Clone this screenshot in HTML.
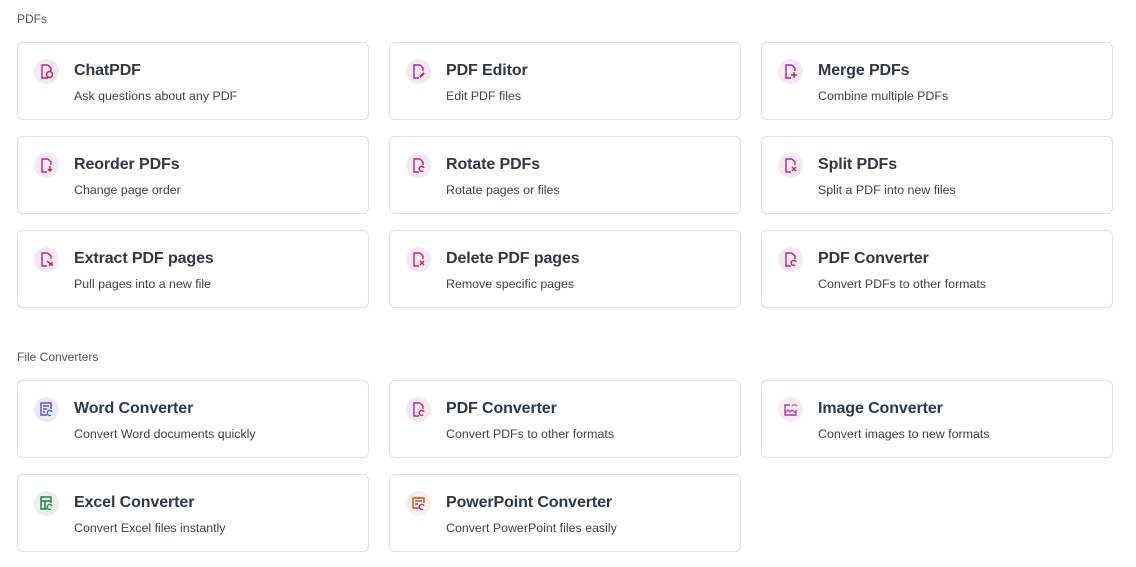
<!DOCTYPE html>
<html><head><meta charset="utf-8"><style>
*{box-sizing:border-box;margin:0;padding:0}
body{width:1136px;height:567px;background:#fff;font-family:"Liberation Sans",sans-serif;position:relative;overflow:hidden}
.h{position:absolute;left:17px;font-size:12px;color:#4a5160}
.c{position:absolute;width:352px;height:78px;border:1px solid #dcdfe4;border-radius:6px;background:#fff}
.ic{position:absolute;left:16px;top:16px;width:25px;height:25px;border-radius:50%;background:#f6e8f3}
.ic svg{position:absolute;left:5px;top:5px}
.t{position:absolute;left:56px;top:19px;font-size:16px;font-weight:bold;color:#2f3847;letter-spacing:-0.1px}
.s{position:absolute;left:56px;top:46px;font-size:12.4px;color:#3a4252}
</style></head><body>
<div class="h" style="top:12px">PDFs</div>
<div class="h" style="top:350px">File Converters</div>

<div class="c" style="left:17px;top:42px"><div class="ic"><svg width="15" height="15" viewBox="0 0 15 15" fill="none" stroke="#b0279b" stroke-width="1.4"><path d="M9 1H3v13h6M9 1l3 3v3"/><circle cx="10.5" cy="10.5" r="3" stroke="#d0243a"/></svg></div><div class="t">ChatPDF</div><div class="s">Ask questions about any PDF</div></div>
<div class="c" style="left:389px;top:42px"><div class="ic"><svg width="15" height="15" viewBox="0 0 15 15" fill="none" stroke="#b0279b" stroke-width="1.4"><path d="M9 1H3v13h5M9 1l3 3v3"/><path d="M9 13l4-4" stroke="#d0243a" stroke-width="2"/></svg></div><div class="t">PDF Editor</div><div class="s">Edit PDF files</div></div>
<div class="c" style="left:761px;top:42px"><div class="ic"><svg width="15" height="15" viewBox="0 0 15 15" fill="none" stroke="#b0279b" stroke-width="1.4"><path d="M9 1H3v13h5M9 1l3 3v3"/><path d="M11 8v6M8 11h6" stroke="#d0243a"/></svg></div><div class="t">Merge PDFs</div><div class="s">Combine multiple PDFs</div></div>

<div class="c" style="left:17px;top:136px"><div class="ic"><svg width="15" height="15" viewBox="0 0 15 15" fill="none" stroke="#b0279b" stroke-width="1.4"><path d="M9 1H3v13h5M9 1l3 3v3"/><path d="M11 8v5M9 11l2 2 2-2" stroke="#d0243a"/></svg></div><div class="t">Reorder PDFs</div><div class="s">Change page order</div></div>
<div class="c" style="left:389px;top:136px"><div class="ic"><svg width="15" height="15" viewBox="0 0 15 15" fill="none" stroke="#b0279b" stroke-width="1.4"><path d="M9 1H3v13h5M9 1l3 3v3"/><path d="M13 10a2.5 2.5 0 1 0-1 3" stroke="#d0243a"/></svg></div><div class="t">Rotate PDFs</div><div class="s">Rotate pages or files</div></div>
<div class="c" style="left:761px;top:136px"><div class="ic"><svg width="15" height="15" viewBox="0 0 15 15" fill="none" stroke="#b0279b" stroke-width="1.4"><path d="M9 1H3v13h5M9 1l3 3v3"/><path d="M9 9l4 4M13 9l-4 4" stroke="#d0243a"/></svg></div><div class="t">Split PDFs</div><div class="s">Split a PDF into new files</div></div>

<div class="c" style="left:17px;top:230px"><div class="ic"><svg width="15" height="15" viewBox="0 0 15 15" fill="none" stroke="#b0279b" stroke-width="1.4"><path d="M9 1H3v13h5M9 1l3 3v3"/><path d="M8 9l5 4M10 13h3v-3" stroke="#d0243a"/></svg></div><div class="t">Extract PDF pages</div><div class="s">Pull pages into a new file</div></div>
<div class="c" style="left:389px;top:230px"><div class="ic"><svg width="15" height="15" viewBox="0 0 15 15" fill="none" stroke="#b0279b" stroke-width="1.4"><path d="M9 1H3v13h5M9 1l3 3v3"/><path d="M9 9l4 4M13 9l-4 4" stroke="#d0243a"/></svg></div><div class="t">Delete PDF pages</div><div class="s">Remove specific pages</div></div>
<div class="c" style="left:761px;top:230px"><div class="ic"><svg width="15" height="15" viewBox="0 0 15 15" fill="none" stroke="#b0279b" stroke-width="1.4"><path d="M9 1H3v13h5M9 1l3 3v3"/><path d="M13 10a2.5 2.5 0 1 0-1 3" stroke="#d0243a"/></svg></div><div class="t">PDF Converter</div><div class="s">Convert PDFs to other formats</div></div>

<div class="c" style="left:17px;top:380px"><div class="ic" style="background:#ebeafd"><svg width="15" height="15" viewBox="0 0 15 15" fill="none" stroke="#5b4ee0" stroke-width="1.4"><path d="M8 13H2V1h10v6M4 4h6M4 7h4M4 10h2"/><path d="M13 10a2.5 2.5 0 1 0-1 3" stroke="#2b7de0"/></svg></div><div class="t">Word Converter</div><div class="s">Convert Word documents quickly</div></div>
<div class="c" style="left:389px;top:380px"><div class="ic"><svg width="15" height="15" viewBox="0 0 15 15" fill="none" stroke="#b0279b" stroke-width="1.4"><path d="M9 1H3v13h5M9 1l3 3v3"/><path d="M13 10a2.5 2.5 0 1 0-1 3" stroke="#d0243a"/></svg></div><div class="t">PDF Converter</div><div class="s">Convert PDFs to other formats</div></div>
<div class="c" style="left:761px;top:380px"><div class="ic" style="background:#f5ecf5"><svg width="15" height="15" viewBox="0 0 15 15" fill="none" stroke="#a33fa8" stroke-width="1.4"><path d="M7 3H2v10h11V8"/><path d="M2 11l3-3 2 2 2-2 4 3" stroke="#c6408a"/><path d="M9 4a3 3 0 0 1 5 0" stroke="#e07b3a"/></svg></div><div class="t">Image Converter</div><div class="s">Convert images to new formats</div></div>

<div class="c" style="left:17px;top:474px"><div class="ic" style="background:#e5f1ea"><svg width="15" height="15" viewBox="0 0 15 15" fill="none" stroke="#1f7a45" stroke-width="1.4"><path d="M8 13H2V1h10v6M2 5h10M6 5v8"/><path d="M13 10a2.5 2.5 0 1 0-1 3" stroke="#2f9a5a"/></svg></div><div class="t">Excel Converter</div><div class="s">Convert Excel files instantly</div></div>
<div class="c" style="left:389px;top:474px"><div class="ic" style="background:#fbeee8"><svg width="15" height="15" viewBox="0 0 15 15" fill="none" stroke="#c9502b" stroke-width="1.4"><path d="M8 12H2V2h11v5M4 5h7M4 8h3"/><path d="M13 10a2.5 2.5 0 1 0-1 3" stroke="#9b3bb0"/></svg></div><div class="t">PowerPoint Converter</div><div class="s">Convert PowerPoint files easily</div></div>
</body></html>
